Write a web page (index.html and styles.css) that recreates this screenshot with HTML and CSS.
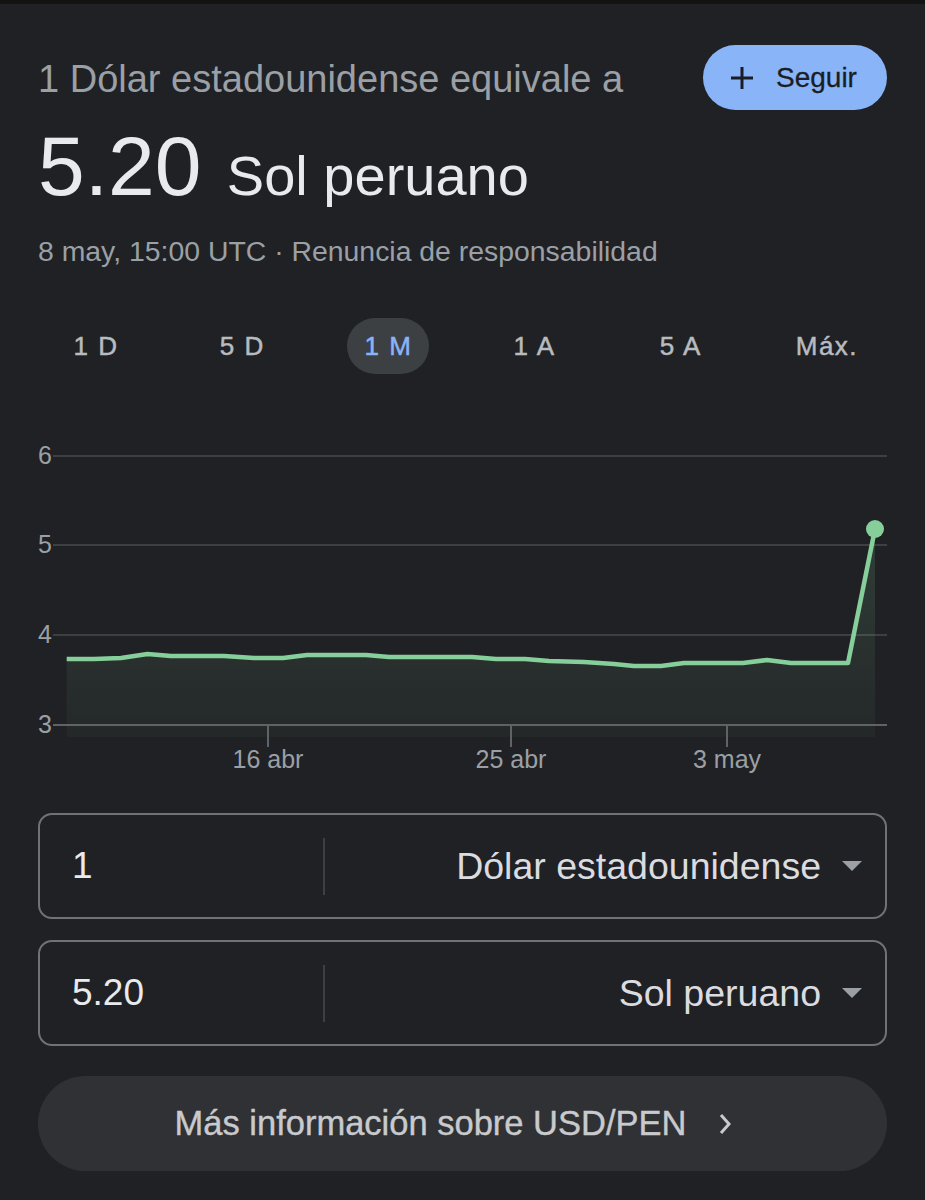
FILE: index.html
```html
<!DOCTYPE html>
<html lang="es">
<head>
  <meta charset="UTF-8">
  <meta name="viewport" content="width=device-width, initial-scale=1.0">
  <title>USD a PEN</title>
  <link rel="stylesheet" href="styles.css">
</head>
<body>

  <div class="top-strip"></div>

  <div class="converter-card">
    <div class="header">
      <p class="equivale">1 Dólar estadounidense equivale a</p>
      <button class="follow-btn">
        <svg class="plus-icon" width="24" height="24" viewBox="0 0 24 24">
          <path d="M12 1v22M1 12h22" stroke="currentColor" stroke-width="3" fill="none"/>
        </svg>
        Seguir
      </button>
    </div>

    <div class="rate">
      <span class="rate-value">5.20</span>
      <span class="rate-unit">Sol peruano</span>
    </div>

    <p class="updated">8 may, 15:00 UTC · Renuncia de responsabilidad</p>

    <div class="range-tabs">
      <div class="tab"><span>1 D</span></div>
      <div class="tab"><span>5 D</span></div>
      <div class="tab active"><span>1 M</span></div>
      <div class="tab"><span>1 A</span></div>
      <div class="tab"><span>5 A</span></div>
      <div class="tab"><span>Máx.</span></div>
    </div>

    <!-- Chart: 1 unit = 90px, value 3 sits on y=285 -->
    <svg class="chart" width="849" height="340" viewBox="0 0 849 340">
      <defs>
        <linearGradient id="area-fill" gradientUnits="userSpaceOnUse" x1="0" y1="89" x2="0" y2="297">
          <stop offset="0" stop-color="#81c995" stop-opacity="0.17"/>
          <stop offset="1" stop-color="#81c995" stop-opacity="0.04"/>
        </linearGradient>
      </defs>

      <line class="grid" x1="15" y1="16" x2="849" y2="16"/>
      <line class="grid" x1="15" y1="105" x2="849" y2="105"/>
      <line class="grid" x1="15" y1="195" x2="849" y2="195"/>

      <text class="axis-label" x="0" y="24">6</text>
      <text class="axis-label" x="0" y="113">5</text>
      <text class="axis-label" x="0" y="203">4</text>
      <text class="axis-label" x="0" y="293">3</text>

      <polygon fill="url(#area-fill)" points="28.7,219 56,219 83,218 109.5,214 133,216 186,216 216,218 245,218 269,215 328,215 351,217 434,217 458,219 487,219 511,221 546,222 576,224 596,226 623,226 646,223 705,223 729,220 753,223 810,223 837,89 837,297 28.7,297"/>

      <line class="baseline" x1="15" y1="285" x2="849" y2="285"/>
      <line class="tick" x1="230" y1="285" x2="230" y2="307"/>
      <line class="tick" x1="473" y1="285" x2="473" y2="307"/>
      <line class="tick" x1="689" y1="285" x2="689" y2="307"/>

      <polyline class="price-line" points="28.7,219 56,219 83,218 109.5,214 133,216 186,216 216,218 245,218 269,215 328,215 351,217 434,217 458,219 487,219 511,221 546,222 576,224 596,226 623,226 646,223 705,223 729,220 753,223 810,223 837,89"/>
      <circle class="price-dot" cx="837" cy="89" r="9"/>

      <text class="axis-label date" x="230" y="328">16 abr</text>
      <text class="axis-label date" x="473" y="328">25 abr</text>
      <text class="axis-label date" x="689" y="328">3 may</text>
    </svg>

    <div class="currency-box first">
      <div class="amount">1</div>
      <div class="divider"></div>
      <div class="currency">
        <span>Dólar estadounidense</span>
        <span class="caret"></span>
      </div>
    </div>

    <div class="currency-box">
      <div class="amount">5.20</div>
      <div class="divider"></div>
      <div class="currency">
        <span>Sol peruano</span>
        <span class="caret"></span>
      </div>
    </div>

    <button class="more-btn">
      Más información sobre USD/PEN
      <svg class="chevron" width="14" height="24" viewBox="0 0 14 24">
        <path d="M3 3l8 9-8 9" stroke="currentColor" stroke-width="3" fill="none"/>
      </svg>
    </button>
  </div>

</body>
</html>
```

FILE: styles.css
```css
body {
  margin: 0;
  padding: 0;
  background-color: #202124;
  font-family: "Liberation Sans", Arial, sans-serif;
  color: #e8eaed;
}
.top-strip {
  height: 4px;
  background-color: #131314;
}
.converter-card {
  padding: 0 38px;
}
.header {
  display: flex;
  justify-content: space-between;
  align-items: center;
  margin-top: 41px;
}
.equivale {
  margin: 0;
  padding-top: 3px;
  font-size: 38px;
  line-height: 44px;
  color: #9aa0a6;
}
.follow-btn {
  display: flex;
  align-items: center;
  gap: 22px;
  width: 184px;
  height: 65px;
  padding: 0 0 0 27px;
  border: none;
  border-radius: 33px;
  background-color: #8ab4f8;
  color: #1b1d24;
  font-family: "Liberation Sans", Arial, sans-serif;
  font-size: 28px;
  -webkit-text-stroke: 0.3px #1b1d24;
  cursor: pointer;
}
.rate {
  margin-top: 14px;
  font-size: 84px;
  line-height: 84px;
}
.rate-unit {
  margin-left: 2px;
  font-size: 56px;
}
.updated {
  margin: 16px 0 0;
  font-size: 28.4px;
  line-height: 34px;
  color: #9aa0a6;
}
.range-tabs {
  display: grid;
  grid-template-columns: repeat(6, 1fr);
  margin: 50px -13px 0 -15px;
}
.tab {
  display: flex;
  justify-content: center;
}
.tab span {
  display: block;
  height: 56px;
  padding: 0 17px;
  border-radius: 28px;
  line-height: 56px;
  font-size: 26px;
  letter-spacing: 1.5px;
  color: #b8bbbf;
  -webkit-text-stroke: 0.5px #b8bbbf;
}
.tab.active span {
  background-color: #3c4043;
  color: #8ab4f8;
  -webkit-text-stroke: 0.5px #8ab4f8;
}
.chart {
  display: block;
  margin-top: 66px;
}
.chart .grid {
  stroke: #3c4043;
  stroke-width: 2;
}
.chart .baseline,
.chart .tick {
  stroke: #5f6368;
  stroke-width: 2;
}
.chart .price-line {
  fill: none;
  stroke: #86cf9b;
  stroke-width: 4.5;
  stroke-linejoin: round;
}
.chart .price-dot {
  fill: #86cf9b;
}
.axis-label {
  font-family: "Liberation Sans", Arial, sans-serif;
  font-size: 25px;
  fill: #9aa0a6;
}
.axis-label.date {
  text-anchor: middle;
}
.currency-box {
  display: flex;
  align-items: center;
  height: 102px;
  margin-top: 21px;
  border: 2px solid #6f7377;
  border-radius: 14px;
}
.currency-box.first {
  margin-top: 33px;
}
.amount {
  width: 251px;
  padding-left: 32px;
  font-size: 37px;
}
.divider {
  width: 2px;
  height: 57px;
  background-color: #3c4043;
}
.currency {
  flex: 1;
  display: flex;
  justify-content: flex-end;
  align-items: center;
  gap: 21px;
  padding-right: 23px;
  font-size: 37.5px;
  color: #dadce0;
}
.caret {
  width: 0;
  height: 0;
  border-left: 10px solid transparent;
  border-right: 10px solid transparent;
  border-top: 10px solid #9aa0a6;
}
.more-btn {
  display: flex;
  justify-content: center;
  align-items: center;
  gap: 32px;
  width: 100%;
  height: 95px;
  margin-top: 30px;
  padding: 0 18px 0 0;
  border: none;
  border-radius: 48px;
  background-color: #303134;
  color: #c8cacd;
  font-family: "Liberation Sans", Arial, sans-serif;
  font-size: 34.5px;
  -webkit-text-stroke: 0.4px #c8cacd;
  cursor: pointer;
}
.chevron {
  color: #c8cacd;
}
```
